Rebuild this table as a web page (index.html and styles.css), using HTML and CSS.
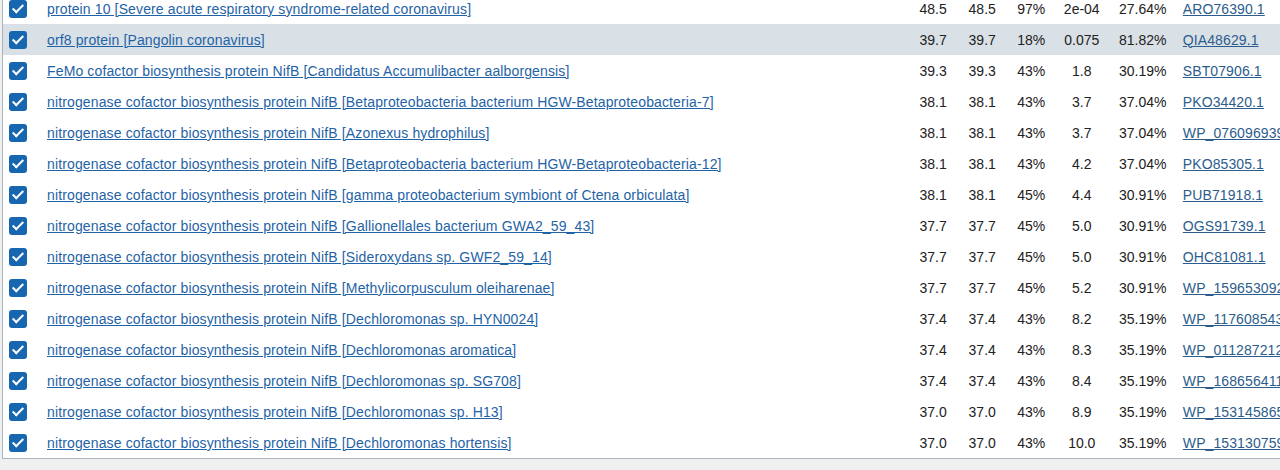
FILE: index.html
```html
<!DOCTYPE html>
<html>
<head>
<meta charset="utf-8">
<link rel="stylesheet" href="styles.css">
</head>
<body>
<div class="frame">
<table class="hits">
<colgroup>
<col class="c-chk"><col class="c-desc"><col class="c-n"><col class="c-n"><col class="c-n"><col class="c-e"><col class="c-pi"><col class="c-acc">
</colgroup>
<tbody>
<tr><td><span class="cb"></span></td><td class="desc"><a href="#">protein 10 [Severe acute respiratory syndrome-related coronavirus]</a></td><td>48.5</td><td>48.5</td><td>97%</td><td>2e-04</td><td>27.64%</td><td class="acc"><a href="#">ARO76390.1</a></td></tr>
<tr class="sel"><td><span class="cb"></span></td><td class="desc"><a href="#">orf8 protein [Pangolin coronavirus]</a></td><td>39.7</td><td>39.7</td><td>18%</td><td>0.075</td><td>81.82%</td><td class="acc"><a href="#">QIA48629.1</a></td></tr>
<tr><td><span class="cb"></span></td><td class="desc"><a href="#">FeMo cofactor biosynthesis protein NifB [Candidatus Accumulibacter aalborgensis]</a></td><td>39.3</td><td>39.3</td><td>43%</td><td>1.8</td><td>30.19%</td><td class="acc"><a href="#">SBT07906.1</a></td></tr>
<tr><td><span class="cb"></span></td><td class="desc"><a href="#">nitrogenase cofactor biosynthesis protein NifB [Betaproteobacteria bacterium HGW-Betaproteobacteria-7]</a></td><td>38.1</td><td>38.1</td><td>43%</td><td>3.7</td><td>37.04%</td><td class="acc"><a href="#">PKO34420.1</a></td></tr>
<tr><td><span class="cb"></span></td><td class="desc"><a href="#">nitrogenase cofactor biosynthesis protein NifB [Azonexus hydrophilus]</a></td><td>38.1</td><td>38.1</td><td>43%</td><td>3.7</td><td>37.04%</td><td class="acc"><a href="#">WP_076096939.1</a></td></tr>
<tr><td><span class="cb"></span></td><td class="desc"><a href="#">nitrogenase cofactor biosynthesis protein NifB [Betaproteobacteria bacterium HGW-Betaproteobacteria-12]</a></td><td>38.1</td><td>38.1</td><td>43%</td><td>4.2</td><td>37.04%</td><td class="acc"><a href="#">PKO85305.1</a></td></tr>
<tr><td><span class="cb"></span></td><td class="desc"><a href="#">nitrogenase cofactor biosynthesis protein NifB [gamma proteobacterium symbiont of Ctena orbiculata]</a></td><td>38.1</td><td>38.1</td><td>45%</td><td>4.4</td><td>30.91%</td><td class="acc"><a href="#">PUB71918.1</a></td></tr>
<tr><td><span class="cb"></span></td><td class="desc"><a href="#">nitrogenase cofactor biosynthesis protein NifB [Gallionellales bacterium GWA2_59_43]</a></td><td>37.7</td><td>37.7</td><td>45%</td><td>5.0</td><td>30.91%</td><td class="acc"><a href="#">OGS91739.1</a></td></tr>
<tr><td><span class="cb"></span></td><td class="desc"><a href="#">nitrogenase cofactor biosynthesis protein NifB [Sideroxydans sp. GWF2_59_14]</a></td><td>37.7</td><td>37.7</td><td>45%</td><td>5.0</td><td>30.91%</td><td class="acc"><a href="#">OHC81081.1</a></td></tr>
<tr><td><span class="cb"></span></td><td class="desc"><a href="#">nitrogenase cofactor biosynthesis protein NifB [Methylicorpusculum oleiharenae]</a></td><td>37.7</td><td>37.7</td><td>45%</td><td>5.2</td><td>30.91%</td><td class="acc"><a href="#">WP_159653092.1</a></td></tr>
<tr><td><span class="cb"></span></td><td class="desc"><a href="#">nitrogenase cofactor biosynthesis protein NifB [Dechloromonas sp. HYN0024]</a></td><td>37.4</td><td>37.4</td><td>43%</td><td>8.2</td><td>35.19%</td><td class="acc"><a href="#">WP_117608543.1</a></td></tr>
<tr><td><span class="cb"></span></td><td class="desc"><a href="#">nitrogenase cofactor biosynthesis protein NifB [Dechloromonas aromatica]</a></td><td>37.4</td><td>37.4</td><td>43%</td><td>8.3</td><td>35.19%</td><td class="acc"><a href="#">WP_011287212.1</a></td></tr>
<tr><td><span class="cb"></span></td><td class="desc"><a href="#">nitrogenase cofactor biosynthesis protein NifB [Dechloromonas sp. SG708]</a></td><td>37.4</td><td>37.4</td><td>43%</td><td>8.4</td><td>35.19%</td><td class="acc"><a href="#">WP_168656411.1</a></td></tr>
<tr><td><span class="cb"></span></td><td class="desc"><a href="#">nitrogenase cofactor biosynthesis protein NifB [Dechloromonas sp. H13]</a></td><td>37.0</td><td>37.0</td><td>43%</td><td>8.9</td><td>35.19%</td><td class="acc"><a href="#">WP_153145865.1</a></td></tr>
<tr><td><span class="cb"></span></td><td class="desc"><a href="#">nitrogenase cofactor biosynthesis protein NifB [Dechloromonas hortensis]</a></td><td>37.0</td><td>37.0</td><td>43%</td><td>10.0</td><td>35.19%</td><td class="acc"><a href="#">WP_153130759.1</a></td></tr>
</tbody>
</table>
</div>
</body>
</html>
```
FILE: styles.css
```css
html, body {
  margin: 0;
  padding: 0;
  background: #f0f0f0;
  height: 470px;
  overflow: hidden;
}
.frame {
  margin-left: 2px;
  width: 1278px;
  height: 465px;
  margin-top: -7px;
  background: #ffffff;
  border-left: 1px solid #a9b4be;
  border-bottom: 1px solid #a9b4be;
  overflow: hidden;
}
.hits {
  border-collapse: collapse;
  table-layout: fixed;
  width: 1400px;
  font-family: "Liberation Sans", Arial, sans-serif;
  font-size: 14px;
  color: #222;
}
.c-chk { width: 44px; }
.c-desc { width: 861px; }
.c-n { width: 49px; }
.c-e { width: 52px; }
.c-pi { width: 70px; }
.c-acc { width: 225px; }
.hits td {
  height: 31px;
  padding: 0;
  text-align: center;
  vertical-align: middle;
  white-space: nowrap;
  overflow: hidden;
}
.hits tr.sel td { background: #d9e0e6; }
.hits td.desc, .hits td.acc { text-align: left; }
.hits td.desc { letter-spacing: 0.13px; }
.hits td.acc { padding-left: 5px; letter-spacing: 0.1px; }
.desc a { color: #1f63a6; text-decoration: underline; }
.acc a { color: #2d5d8c; text-decoration: underline; }
.cb {
  display: block;
  margin-left: 6px;
  width: 18px;
  height: 18px;
  border-radius: 3px;
  background: #1766b0;
  position: relative;
}
.cb::after {
  content: "";
  position: absolute;
  left: 6px;
  top: 2.5px;
  width: 4px;
  height: 9px;
  border-right: 2.5px solid #fff;
  border-bottom: 2.5px solid #fff;
  transform: rotate(45deg);
}
```
